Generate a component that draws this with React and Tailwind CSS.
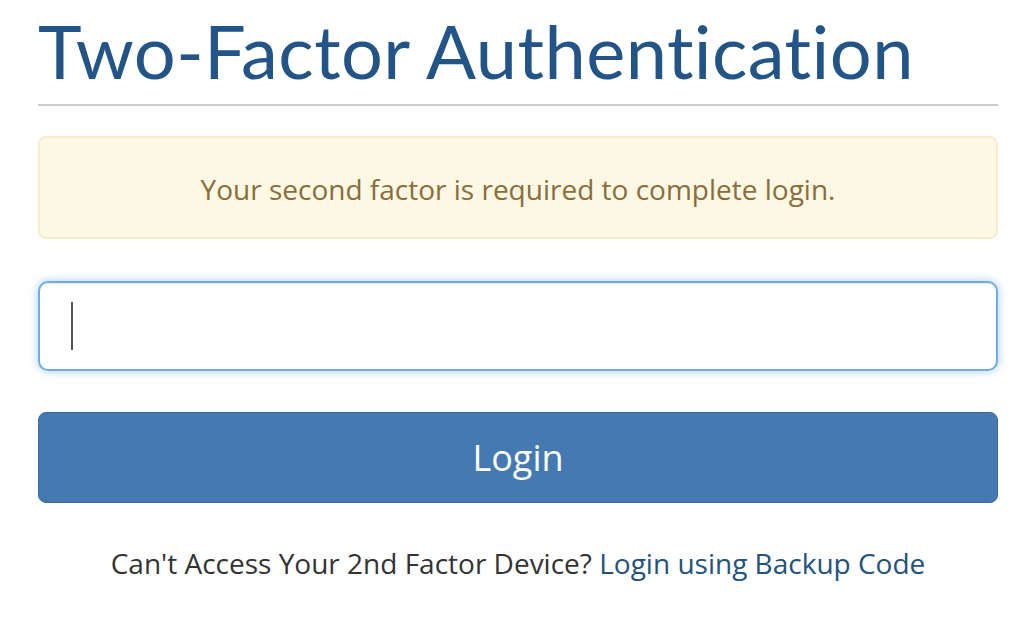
export default function App() {
  return (
    <div className="min-h-screen bg-white">
      <div className="ml-[38px] w-[960px] font-['Open_Sans',sans-serif]">
        <h1 className="mt-[14px] pb-[16px] border-b-2 border-[#cccccc] font-['Lato',sans-serif] text-[74px] leading-none font-normal tracking-[0.45px] [font-variant-ligatures:none] text-[#235487]">
          Two-Factor Authentication
        </h1>

        {/* Warning alert */}
        <div className="mt-[30px] h-[103px] flex items-center justify-center pt-[2px] rounded-[8px] border-2 border-[#f9ebcc] bg-[#fcf8e4] text-[28px] leading-[36px] text-[#8a6d3b]">
          Your second factor is required to complete login.
        </div>

        {/* Code input (focused) */}
        <div className="relative mt-[42px]">
          <input
            type="text"
            className="block w-full h-[90px] px-[32px] rounded-[10px] border-2 border-[#73ace4] bg-white text-[36px] text-[#555] outline-none caret-transparent shadow-[inset_0_1px_1px_rgba(0,0,0,0.075),0_0_10px_rgba(102,175,233,0.6)]"
          />
          <span className="absolute left-[33px] top-[21px] w-[2px] h-[48px] bg-[#555555]" />
        </div>

        <button className="mt-[41px] w-full h-[91px] rounded-[8px] border border-[#3a6b9f] bg-[#4479b1] text-white text-[36px] leading-none">
          Login
        </button>

        <p className="mt-[41px] text-center text-[28px] leading-[38px] text-[#333333]">
          Can't Access Your 2nd Factor Device?{" "}
          <a href="#" className="text-[#23527c]">
            Login using Backup Code
          </a>
        </p>
      </div>
    </div>
  );
}
